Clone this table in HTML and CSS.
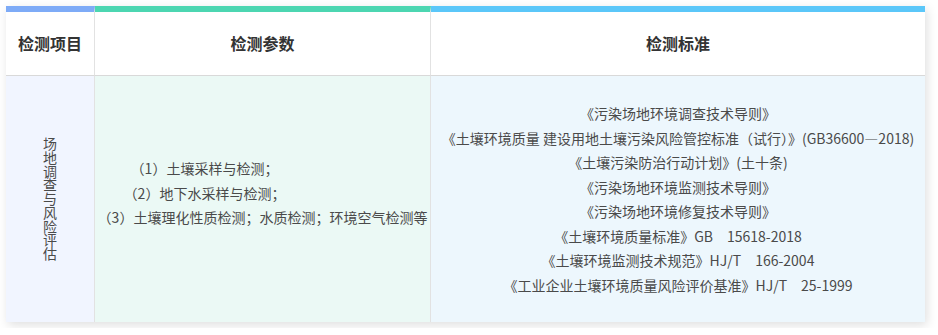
FILE: index.html
```html
<!DOCTYPE html>
<html lang="zh-CN">
<head>
<meta charset="utf-8">
<title>检测项目</title>
<link rel="stylesheet" href="styles.css">
</head>
<body>
<div class="table">
  <div class="head head-item">检测项目</div>
  <div class="head head-param">检测参数</div>
  <div class="head head-std">检测标准</div>

  <div class="cell cell-item">
    <div class="vertical">场地调查与风险评估</div>
  </div>
  <div class="cell cell-param">
    <div class="param-list">
      <div class="param p1">（1）土壤采样与检测；</div>
      <div class="param p2">（2）地下水采样与检测；</div>
      <div class="param p3">（3）土壤理化性质检测；水质检测；环境空气检测等</div>
    </div>
  </div>
  <div class="cell cell-std">
    <div class="std-list">
      <div>《污染场地环境调查技术导则》</div>
      <div>《土壤环境质量 建设用地土壤污染风险管控标准（试行）》(GB36600—2018)</div>
      <div>《土壤污染防治行动计划》(土十条)</div>
      <div>《污染场地环境监测技术导则》</div>
      <div>《污染场地环境修复技术导则》</div>
      <div>《土壤环境质量标准》GB　15618-2018</div>
      <div>《土壤环境监测技术规范》HJ/T　166-2004</div>
      <div>《工业企业土壤环境质量风险评价基准》HJ/T　25-1999</div>
    </div>
  </div>
</div>
</body>
</html>
```

FILE: styles.css
```css
html, body {
  margin: 0;
  padding: 0;
  background: #ffffff;
}

body {
  padding: 6px;
  font-family: "Noto Sans CJK SC", "Noto Sans", sans-serif;
}

.table {
  width: 919px;
  display: grid;
  grid-template-columns: 89px 336px 494px;
  grid-template-rows: 70px 246px;
  box-shadow: 2px 3px 10px rgba(0, 0, 0, 0.13);
  background: #ffffff;
}

.head {
  box-sizing: border-box;
  display: flex;
  align-items: center;
  justify-content: center;
  background: #ffffff;
  border-top: 6px solid;
  border-bottom: 1px solid #d9d9d9;
  font-size: 16px;
  font-weight: bold;
  color: #333333;
  padding-bottom: 1px;
}

.head-item {
  border-top-color: #7eabf7;
  border-right: 1px solid #e2e2e2;
}

.head-param {
  border-top-color: #4cd6b1;
  border-right: 1px solid #e2e2e2;
}

.head-std {
  border-top-color: #5bc7f9;
}

.cell {
  box-sizing: border-box;
  display: flex;
  align-items: center;
  justify-content: center;
  font-size: 14px;
  color: #4a4a4a;
}

.cell-item {
  background: #f1f5ff;
  border-right: 1px solid #e2e2e2;
}

.vertical {
  width: 14px;
  line-height: 13.7px;
  text-align: center;
  word-break: break-all;
}

.cell-param {
  background: #ebf9f5;
  border-right: 1px solid #e2e2e2;
}

.param-list {
  display: flex;
  flex-direction: column;
  align-items: flex-start;
  line-height: 24.5px;
  padding-bottom: 12px;
}

.p1 {
  padding-left: 33px;
}

.p2 {
  padding-left: 26px;
}

.cell-std {
  background: #edf7fd;
}

.std-list {
  text-align: center;
  line-height: 24.5px;
  white-space: nowrap;
}
```
